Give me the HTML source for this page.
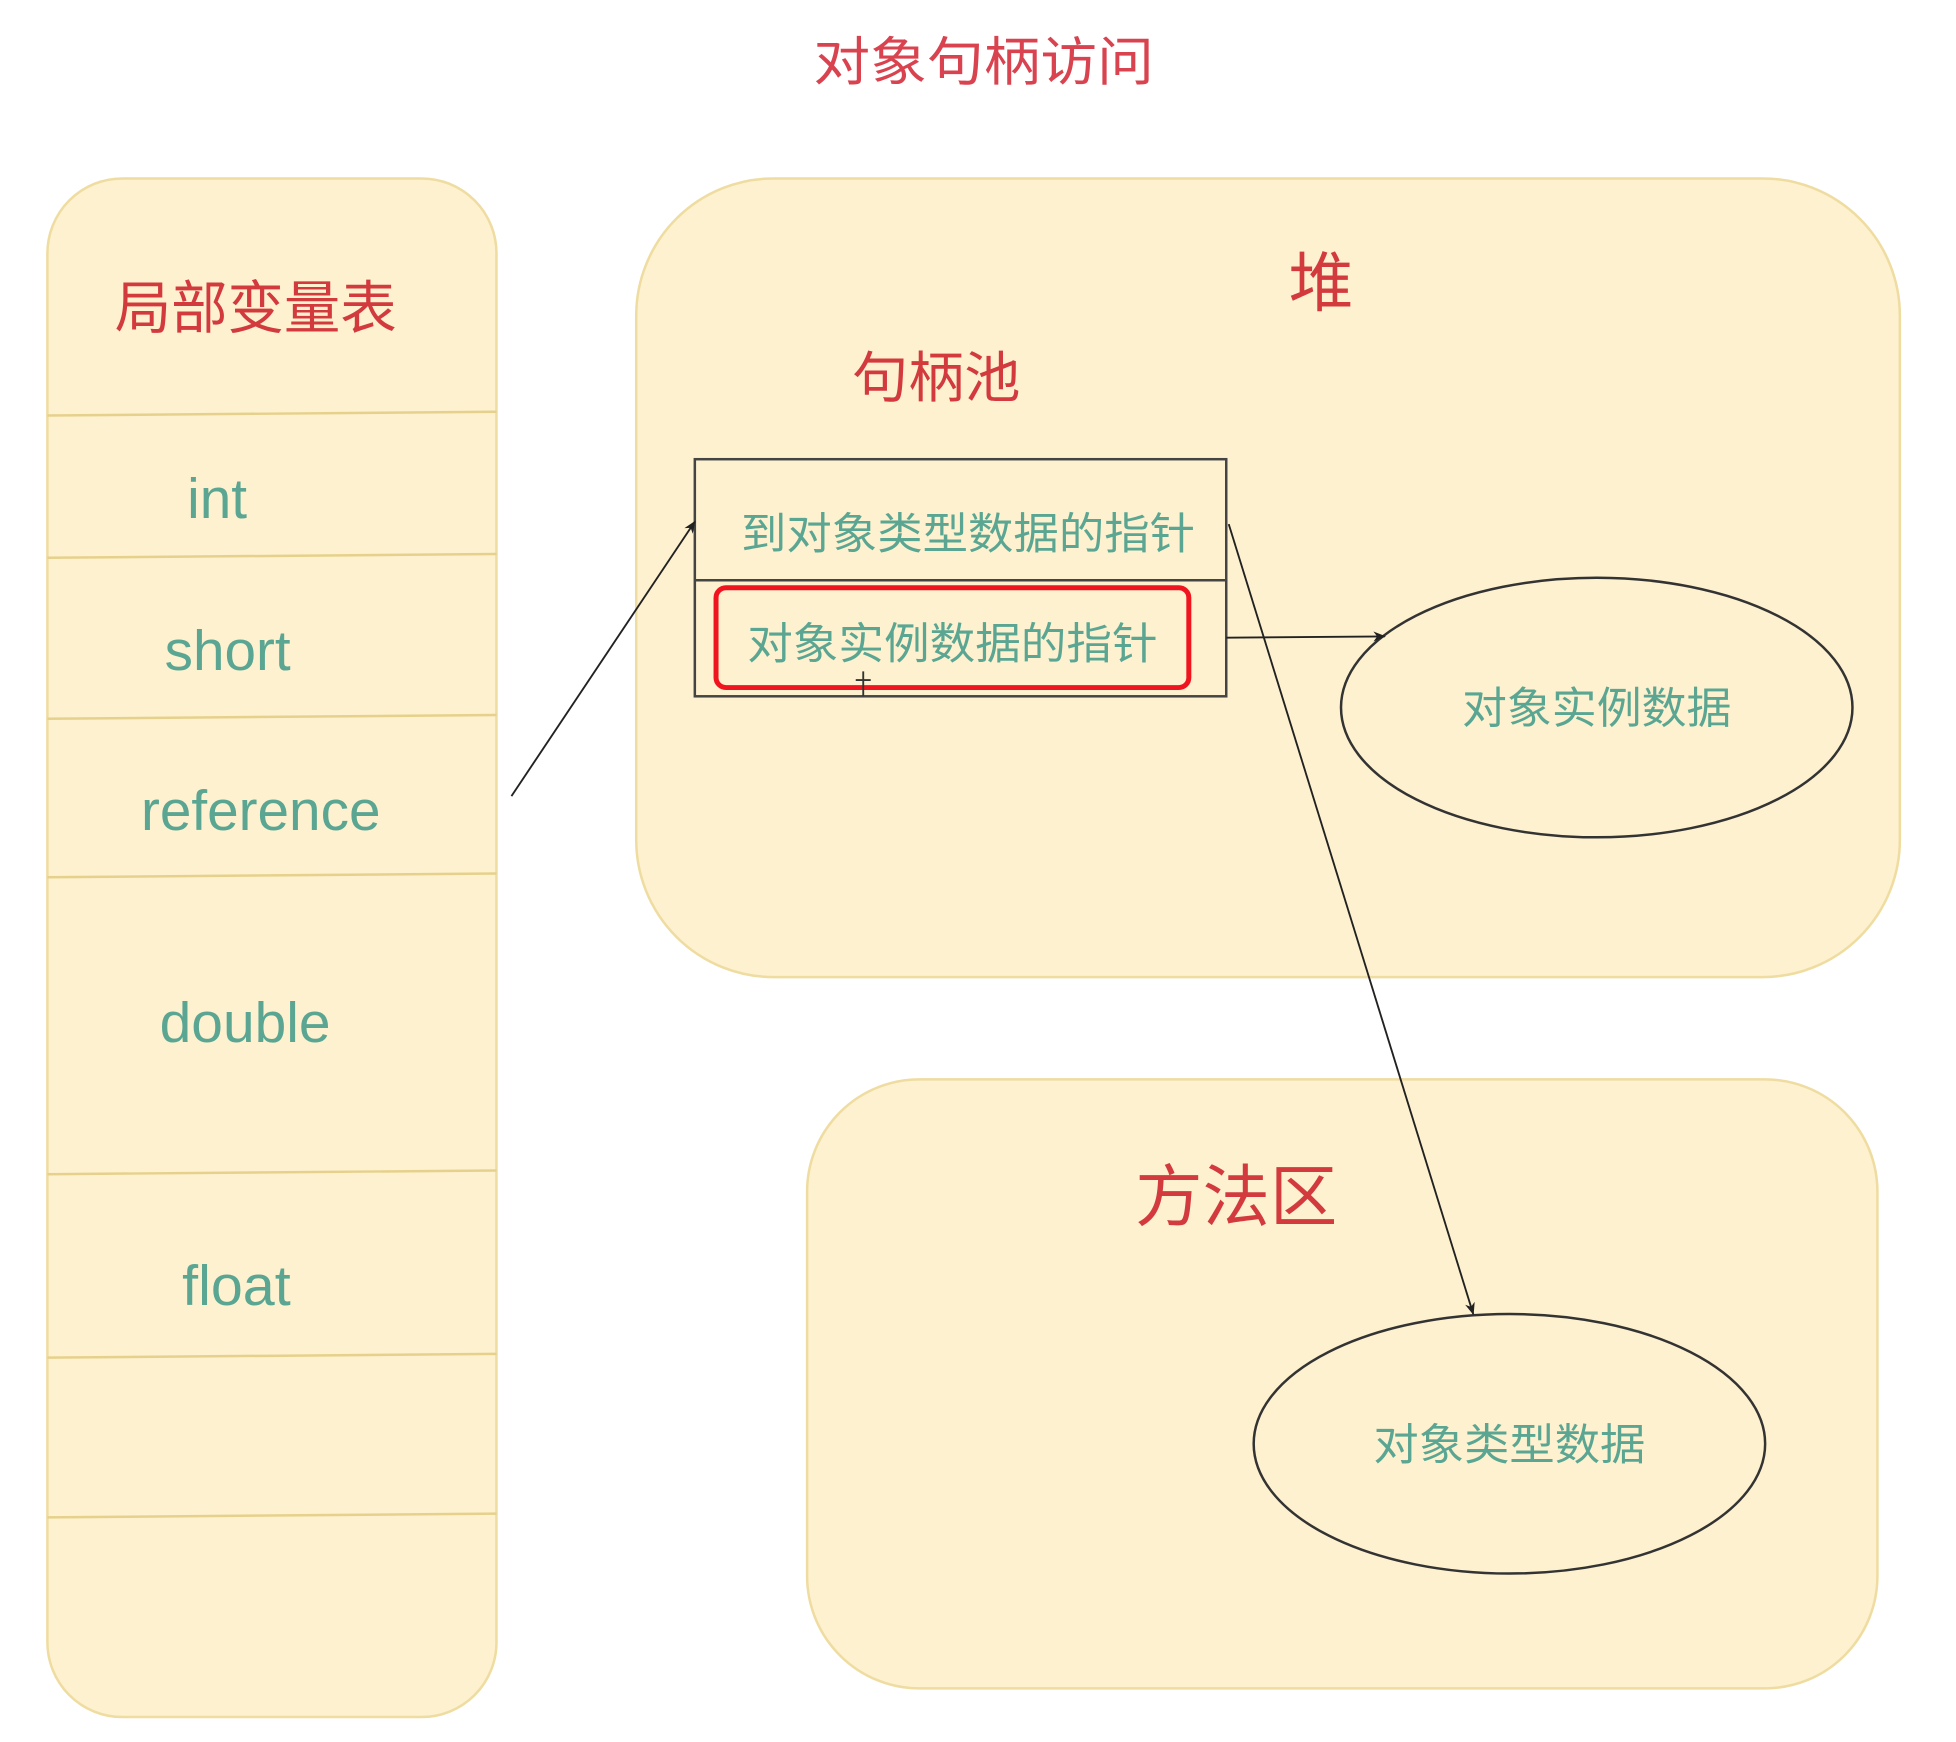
<!DOCTYPE html>
<html><head><meta charset="utf-8"><style>
html,body{margin:0;padding:0;background:#fff;}
svg{display:block;}
text{font-family:"Liberation Sans","Noto Sans CJK SC",sans-serif;}
</style></head><body>
<svg width="1956" height="1742" viewBox="0 0 1568 1396" preserveAspectRatio="none" xmlns="http://www.w3.org/2000/svg">
<defs><marker id="ah" markerWidth="10" markerHeight="10" refX="9" refY="5" orient="auto" markerUnits="userSpaceOnUse"><path d="M0,1 L10,5 L0,9 L3,5 Z" fill="#222"/></marker></defs>
<rect width="1568" height="1396" fill="#fff"/>
<text x="652" y="64" font-size="42" fill="#d9434f" textLength="273" lengthAdjust="spacingAndGlyphs">对象句柄访问</text>
<!-- left column -->
<rect x="38" y="143" width="360" height="1233" rx="60" fill="#fdf1cf" stroke="#efdca0" stroke-width="2"/>
<g stroke="#e6d18c" stroke-width="2">
<line x1="38" y1="333" x2="398" y2="330"/>
<line x1="38" y1="447" x2="398" y2="444"/>
<line x1="38" y1="576" x2="398" y2="573"/>
<line x1="38" y1="703" x2="398" y2="700"/>
<line x1="38" y1="941" x2="398" y2="938"/>
<line x1="38" y1="1088" x2="398" y2="1085"/>
<line x1="38" y1="1216" x2="398" y2="1213"/>
</g>
<text x="92" y="263" font-size="46" fill="#d23a3e" textLength="226" lengthAdjust="spacingAndGlyphs">局部变量表</text>
<g fill="#5aa693" font-size="45">
<text x="150" y="415" textLength="48" lengthAdjust="spacingAndGlyphs">int</text>
<text x="132" y="537" textLength="101" lengthAdjust="spacingAndGlyphs">short</text>
<text x="113" y="665" textLength="192" lengthAdjust="spacingAndGlyphs">reference</text>
<text x="128" y="835" textLength="137" lengthAdjust="spacingAndGlyphs">double</text>
<text x="146" y="1046" textLength="87" lengthAdjust="spacingAndGlyphs">float</text>
</g>
<!-- heap -->
<rect x="510" y="143" width="1013" height="640" rx="110" fill="#fdf1cf" stroke="#efdca0" stroke-width="2"/>
<text x="1033" y="245" font-size="52" fill="#d23a3e">堆</text>
<text x="683" y="318" font-size="44" fill="#d23a3e" textLength="135" lengthAdjust="spacingAndGlyphs">句柄池</text>
<rect x="557" y="368" width="426" height="190" fill="#fdf1cf" stroke="#444" stroke-width="2"/>
<line x1="557" y1="465" x2="983" y2="465" stroke="#444" stroke-width="2"/>
<text x="594" y="440" font-size="35" fill="#5aa693" textLength="364" lengthAdjust="spacingAndGlyphs">到对象类型数据的指针</text>
<text x="599" y="528" font-size="35" fill="#5aa693" textLength="329" lengthAdjust="spacingAndGlyphs">对象实例数据的指针</text>
<rect x="574" y="471" width="379" height="80" rx="8" fill="none" stroke="#f0141e" stroke-width="4"/>
<path d="M686 545 h12 M692 538 v20" stroke="#333" stroke-width="1.5"/>
<ellipse cx="1280" cy="567" rx="205" ry="104" fill="none" stroke="#333" stroke-width="2"/>
<text x="1172" y="580" font-size="35" fill="#5aa693" textLength="216" lengthAdjust="spacingAndGlyphs">对象实例数据</text>
<!-- method area -->
<rect x="647" y="865" width="858" height="488" rx="90" fill="#fdf1cf" stroke="#efdca0" stroke-width="2"/>
<text x="910" y="978" font-size="54" fill="#d23a3e" textLength="162" lengthAdjust="spacingAndGlyphs">方法区</text>
<ellipse cx="1210" cy="1157" rx="205" ry="104" fill="none" stroke="#333" stroke-width="2"/>
<text x="1101" y="1170" font-size="35" fill="#5aa693" textLength="218" lengthAdjust="spacingAndGlyphs">对象类型数据</text>
<!-- arrows -->
<line x1="410" y1="638" x2="557" y2="418" stroke="#222" stroke-width="1.5" marker-end="url(#ah)"/>
<line x1="983" y1="511" x2="1110" y2="510" stroke="#222" stroke-width="1.5" marker-end="url(#ah)"/>
<line x1="985" y1="420" x2="1181" y2="1053" stroke="#222" stroke-width="1.5" marker-end="url(#ah)"/>
</svg>
</body></html>
